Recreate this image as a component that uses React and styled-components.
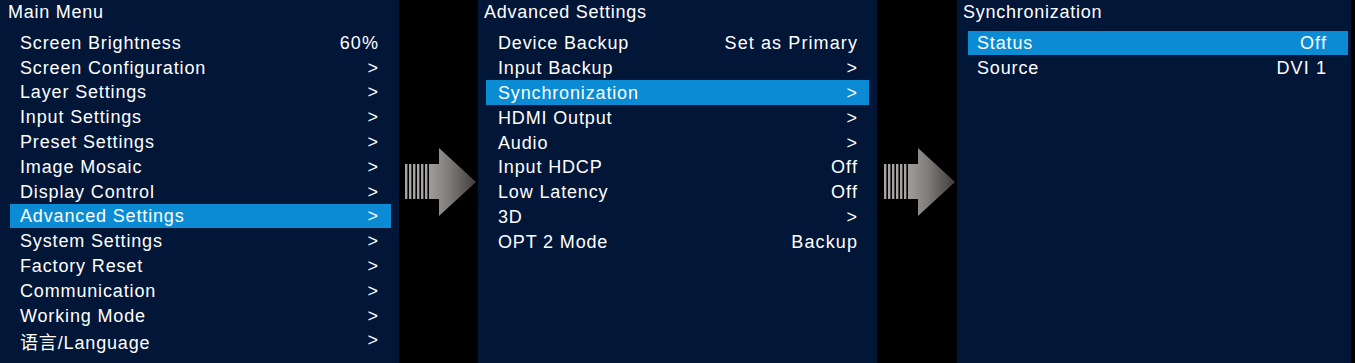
import React from 'react';
import styled, { createGlobalStyle } from 'styled-components';

const GlobalStyle = createGlobalStyle`
    html, body {
        margin: 0;
        padding: 0;
        background: #000;
    }
    body {
        font-family: "Liberation Sans", Arial, "Noto Sans CJK SC", sans-serif;
        color: #fff;
    }
`;

const Screen = styled.div`
    width: 1355px;
    height: 363px;
    display: flex;
    background: #000;
    overflow: hidden;
`;

const Panel = styled.div`
    width: ${p => p.$width}px;
    height: 100%;
    background: #021638;
    display: flex;
    flex-direction: column;
    flex-shrink: 0;
`;

const Title = styled.div`
    height: 24px;
    line-height: 24px;
    padding-left: ${p => p.$inset}px;
    font-size: 18px;
    letter-spacing: 0.75px;
`;

const List = styled.div`
    display: flex;
    flex-direction: column;
    padding-top: ${p => p.$top}px;
    padding-left: ${p => p.$left}px;
    padding-right: ${p => p.$right}px;
`;

const Row = styled.div`
    height: 24.8px;
    box-sizing: border-box;
    padding-top: 2px;
    display: flex;
    align-items: center;
    justify-content: space-between;
    padding-left: ${p => p.$padL}px;
    padding-right: ${p => p.$padR}px;
    font-size: 18px;
    letter-spacing: 0.85px;
    background: ${p => (p.$active ? '#0a8bd3' : 'transparent')};
`;

const Label = styled.span`
    white-space: nowrap;
`;

const Value = styled.span`
    white-space: nowrap;
    letter-spacing: 1.1px;
`;

const Gap = styled.div`
    width: ${p => p.$width}px;
    flex-shrink: 0;
    display: flex;
    align-items: center;
    padding-left: ${p => p.$offset}px;
    box-sizing: border-box;
`;

const Arrow = ({ id }) => (
    <svg width="72" height="68" viewBox="0 0 72 68">
        <defs>
            <linearGradient id={id} x1="0" y1="0" x2="1" y2="0">
                <stop offset="0" stopColor="#a19d9b" />
                <stop offset="0.45" stopColor="#7d7977" />
                <stop offset="1" stopColor="#3f3c3b" />
            </linearGradient>
        </defs>
        {[0, 4, 8, 12, 16, 20].map(x => (
            <rect key={x} x={x} y="16" width="2.4" height="35" fill="#a8a4a2" />
        ))}
        <path d="M24 16 H34 V0 L71 34 L34 68 V51 H24 Z" fill={`url(#${id})`} />
    </svg>
);

const mainMenu = [
    ['Screen Brightness', '60%'],
    ['Screen Configuration', '>'],
    ['Layer Settings', '>'],
    ['Input Settings', '>'],
    ['Preset Settings', '>'],
    ['Image Mosaic', '>'],
    ['Display Control', '>'],
    ['Advanced Settings', '>', true],
    ['System Settings', '>'],
    ['Factory Reset', '>'],
    ['Communication', '>'],
    ['Working Mode', '>'],
    ['语言/Language', '>'],
];

const advanced = [
    ['Device Backup', 'Set as Primary'],
    ['Input Backup', '>'],
    ['Synchronization', '>', true],
    ['HDMI Output', '>'],
    ['Audio', '>'],
    ['Input HDCP', 'Off'],
    ['Low Latency', 'Off'],
    ['3D', '>'],
    ['OPT 2 Mode', 'Backup'],
];

const sync = [
    ['Status', 'Off', true],
    ['Source', 'DVI 1'],
];

const Menu = ({ width, title, titleInset, items, top, left, right, padL, padR }) => (
    <Panel $width={width}>
        <Title $inset={titleInset}>{title}</Title>
        <List $top={top} $left={left} $right={right}>
            {items.map(([label, value, active]) => (
                <Row key={label} $active={active} $padL={padL} $padR={padR}>
                    <Label>{label}</Label>
                    <Value>{value}</Value>
                </Row>
            ))}
        </List>
    </Panel>
);

const App = () => (
    <>
        <GlobalStyle />
        <Screen>
            <Menu width={399} title="Main Menu" titleInset={8} items={mainMenu}
                top={6} left={10} right={8} padL={10} padR={12} />
            <Gap $width={79} $offset={6}><Arrow id="arrowA" /></Gap>
            <Menu width={399} title="Advanced Settings" titleInset={6} items={advanced}
                top={6.5} left={8} right={8} padL={12} padR={11} />
            <Gap $width={80} $offset={7}><Arrow id="arrowB" /></Gap>
            <Menu width={394} title="Synchronization" titleInset={6} items={sync}
                top={6.5} left={11} right={3} padL={9} padR={21} />
        </Screen>
    </>
);

export default App;
